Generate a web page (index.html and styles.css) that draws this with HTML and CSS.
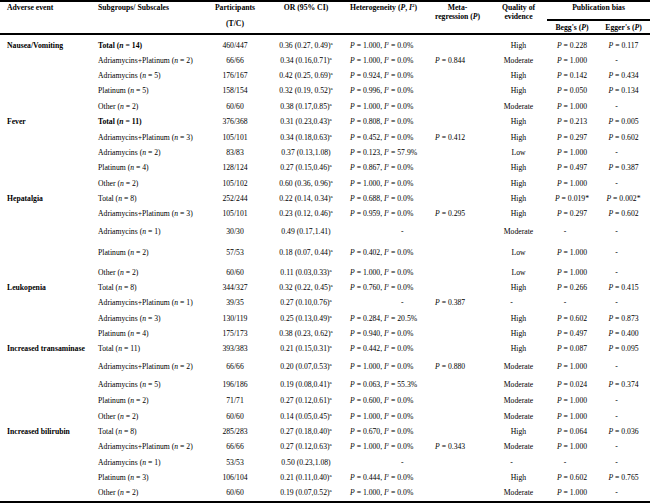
FILE: index.html
```html
<!DOCTYPE html>
<html>
<head>
<meta charset="utf-8">
<link rel="stylesheet" href="styles.css">
</head>
<body>
<table class="t">
<colgroup>
<col class="c1"><col class="c2"><col class="c3"><col class="c4"><col class="c5"><col class="c6"><col class="c7"><col class="c8"><col class="c9">
</colgroup>
<thead>
<tr class="hr1">
<th rowspan="2" class="hl1">Adverse event</th>
<th rowspan="2" class="hl2">Subgroups/ Subscales</th>
<th rowspan="2">Participants<span class="tc">(T/C)</span></th>
<th rowspan="2">OR (95% CI)</th>
<th rowspan="2" class="hlh">Heterogeneity (<i>P</i>, <i>I</i><sup class="s">2</sup>)</th>
<th rowspan="2">Meta-<br>regression (<i>P</i>)</th>
<th rowspan="2">Quality of<br>evidence</th>
<th colspan="2" class="pb">Publication bias</th>
</tr>
<tr class="hr2">
<th class="sub">Begg's (<i>P</i>)</th>
<th class="sub">Egger's (<i>P</i>)</th>
</tr>
</thead>
<tbody>
<tr><td class="ev">Nausea/Vomiting</td><td class="sg"><b>Total (<i>n</i> = 14)</b></td><td>460/447</td><td>0.36 (0.27, 0.49)<sup class="s">a</sup></td><td class="ht"><i>P</i> = 1.000, <i>I</i><sup class="s">2</sup> = 0.0%</td><td class="mr"></td><td>High</td><td><i>P</i> = 0.228</td><td><i>P</i> = 0.117</td></tr>
<tr><td class="ev"></td><td class="sg">Adriamycins+Platinum (<i>n</i> = 2)</td><td>66/66</td><td>0.34 (0.16,0.71)<sup class="s">a</sup></td><td class="ht"><i>P</i> = 1.000, <i>I</i><sup class="s">2</sup> = 0.0%</td><td class="mr"><i>P</i> = 0.844</td><td>Moderate</td><td><i>P</i> = 1.000</td><td class="dash">-</td></tr>
<tr><td class="ev"></td><td class="sg">Adriamycins (<i>n</i> = 5)</td><td>176/167</td><td>0.42 (0.25, 0.69)<sup class="s">a</sup></td><td class="ht"><i>P</i> = 0.924, <i>I</i><sup class="s">2</sup> = 0.0%</td><td class="mr"></td><td>High</td><td><i>P</i> = 0.142</td><td><i>P</i> = 0.434</td></tr>
<tr class="r16"><td class="ev"></td><td class="sg">Platinum (<i>n</i> = 5)</td><td>158/154</td><td>0.32 (0.19, 0.52)<sup class="s">a</sup></td><td class="ht"><i>P</i> = 0.996, <i>I</i><sup class="s">2</sup> = 0.0%</td><td class="mr"></td><td>High</td><td><i>P</i> = 0.050</td><td><i>P</i> = 0.134</td></tr>
<tr><td class="ev"></td><td class="sg">Other (<i>n</i> = 2)</td><td>60/60</td><td>0.38 (0.17,0.85)<sup class="s">a</sup></td><td class="ht"><i>P</i> = 1.000, <i>I</i><sup class="s">2</sup> = 0.0%</td><td class="mr"></td><td>Moderate</td><td><i>P</i> = 1.000</td><td class="dash">-</td></tr>

<tr class="r16"><td class="ev">Fever</td><td class="sg"><b>Total (<i>n</i> = 11)</b></td><td>376/368</td><td>0.31 (0.23,0.43)<sup class="s">a</sup></td><td class="ht"><i>P</i> = 0.808, <i>I</i><sup class="s">2</sup> = 0.0%</td><td class="mr"></td><td>High</td><td><i>P</i> = 0.213</td><td><i>P</i> = 0.005</td></tr>
<tr><td class="ev"></td><td class="sg">Adriamycins+Platinum (<i>n</i> = 3)</td><td>105/101</td><td>0.34 (0.18,0.63)<sup class="s">a</sup></td><td class="ht"><i>P</i> = 0.452, <i>I</i><sup class="s">2</sup> = 0.0%</td><td class="mr"><i>P</i> = 0.412</td><td>High</td><td><i>P</i> = 0.297</td><td><i>P</i> = 0.602</td></tr>
<tr><td class="ev"></td><td class="sg">Adriamycins (<i>n</i> = 2)</td><td>83/83</td><td>0.37 (0.13,1.08)</td><td class="ht"><i>P</i> = 0.123, <i>I</i><sup class="s">2</sup> = 57.9%</td><td class="mr"></td><td>Low</td><td><i>P</i> = 1.000</td><td class="dash">-</td></tr>
<tr class="r16"><td class="ev"></td><td class="sg">Platinum (<i>n</i> = 4)</td><td>128/124</td><td>0.27 (0.15,0.46)<sup class="s">a</sup></td><td class="ht"><i>P</i> = 0.867, <i>I</i><sup class="s">2</sup> = 0.0%</td><td class="mr"></td><td>High</td><td><i>P</i> = 0.497</td><td><i>P</i> = 0.387</td></tr>
<tr><td class="ev"></td><td class="sg">Other (<i>n</i> = 2)</td><td>105/102</td><td>0.60 (0.36, 0.96)<sup class="s">a</sup></td><td class="ht"><i>P</i> = 1.000, <i>I</i><sup class="s">2</sup> = 0.0%</td><td class="mr"></td><td>High</td><td><i>P</i> = 1.000</td><td class="dash">-</td></tr>

<tr><td class="ev">Hepatalgia</td><td class="sg">Total (<i>n</i> = 8)</td><td>252/244</td><td>0.22 (0.14, 0.34)<sup class="s">a</sup></td><td class="ht"><i>P</i> = 0.688, <i>I</i><sup class="s">2</sup> = 0.0%</td><td class="mr"></td><td>High</td><td><i>P</i> = 0.019*</td><td><i>P</i> = 0.002*</td></tr>
<tr class="r18"><td class="ev"></td><td class="sg">Adriamycins+Platinum (<i>n</i> = 3)</td><td>105/101</td><td>0.23 (0.12, 0.46)<sup class="s">a</sup></td><td class="ht"><i>P</i> = 0.959, <i>I</i><sup class="s">2</sup> = 0.0%</td><td class="mr"><i>P</i> = 0.295</td><td>High</td><td><i>P</i> = 0.297</td><td><i>P</i> = 0.602</td></tr>
<tr class="r21"><td class="ev"></td><td class="sg">Adriamycins (<i>n</i> = 1)</td><td>30/30</td><td>0.49 (0.17,1.41)</td><td class="ht hd">-</td><td class="mr"></td><td>Moderate</td><td class="dash">-</td><td class="dash">-</td></tr>
<tr class="r20"><td class="ev"></td><td class="sg">Platinum (<i>n</i> = 2)</td><td>57/53</td><td>0.18 (0.07, 0.44)<sup class="s">a</sup></td><td class="ht"><i>P</i> = 0.402, <i>I</i><sup class="s">2</sup> = 0.0%</td><td class="mr"></td><td>Low</td><td><i>P</i> = 1.000</td><td class="dash">-</td></tr>
<tr><td class="ev"></td><td class="sg">Other (<i>n</i> = 2)</td><td>60/60</td><td>0.11 (0.03,0.33)<sup class="s">a</sup></td><td class="ht"><i>P</i> = 1.000, <i>I</i><sup class="s">2</sup> = 0.0%</td><td class="mr"></td><td>Low</td><td><i>P</i> = 1.000</td><td class="dash">-</td></tr>

<tr><td class="ev">Leukopenia</td><td class="sg">Total (<i>n</i> = 8)</td><td>344/327</td><td>0.32 (0.22, 0.45)<sup class="s">a</sup></td><td class="ht"><i>P</i> = 0.760, <i>I</i><sup class="s">2</sup> = 0.0%</td><td class="mr"></td><td>High</td><td><i>P</i> = 0.266</td><td><i>P</i> = 0.415</td></tr>
<tr class="r16"><td class="ev"></td><td class="sg">Adriamycins+Platinum (<i>n</i> = 1)</td><td>39/35</td><td>0.27 (0.10,0.76)<sup class="s">a</sup></td><td class="ht hd">-</td><td class="mr"><i>P</i> = 0.387</td><td class="dash">-</td><td class="dash">-</td><td class="dash">-</td></tr>
<tr><td class="ev"></td><td class="sg">Adriamycins (<i>n</i> = 3)</td><td>130/119</td><td>0.25 (0.13,0.49)<sup class="s">a</sup></td><td class="ht"><i>P</i> = 0.284, <i>I</i><sup class="s">2</sup> = 20.5%</td><td class="mr"></td><td>High</td><td><i>P</i> = 0.602</td><td><i>P</i> = 0.873</td></tr>
<tr><td class="ev"></td><td class="sg">Platinum (<i>n</i> = 4)</td><td>175/173</td><td>0.38 (0.23, 0.62)<sup class="s">a</sup></td><td class="ht"><i>P</i> = 0.940, <i>I</i><sup class="s">2</sup> = 0.0%</td><td class="mr"></td><td>High</td><td><i>P</i> = 0.497</td><td><i>P</i> = 0.400</td></tr>

<tr class="r18"><td class="ev">Increased transaminase</td><td class="sg">Total (<i>n</i> = 11)</td><td>393/383</td><td>0.21 (0.15,0.31)<sup class="s">a</sup></td><td class="ht"><i>P</i> = 0.442, <i>I</i><sup class="s">2</sup> = 0.0%</td><td class="mr"></td><td>High</td><td><i>P</i> = 0.087</td><td><i>P</i> = 0.095</td></tr>
<tr class="r18"><td class="ev"></td><td class="sg">Adriamycins+Platinum (<i>n</i> = 2)</td><td>66/66</td><td>0.20 (0.07,0.53)<sup class="s">a</sup></td><td class="ht"><i>P</i> = 1.000, <i>I</i><sup class="s">2</sup> = 0.0%</td><td class="mr"><i>P</i> = 0.880</td><td>Moderate</td><td><i>P</i> = 1.000</td><td class="dash">-</td></tr>
<tr class="r16"><td class="ev"></td><td class="sg">Adriamycins (<i>n</i> = 5)</td><td>196/186</td><td>0.19 (0.08,0.41)<sup class="s">a</sup></td><td class="ht"><i>P</i> = 0.063, <i>I</i><sup class="s">2</sup> = 55.3%</td><td class="mr"></td><td>Moderate</td><td><i>P</i> = 0.024</td><td><i>P</i> = 0.374</td></tr>
<tr class="r16"><td class="ev"></td><td class="sg">Platinum (<i>n</i> = 2)</td><td>71/71</td><td>0.27 (0.12,0.61)<sup class="s">a</sup></td><td class="ht"><i>P</i> = 0.600, <i>I</i><sup class="s">2</sup> = 0.0%</td><td class="mr"></td><td>Moderate</td><td><i>P</i> = 1.000</td><td class="dash">-</td></tr>
<tr><td class="ev"></td><td class="sg">Other (<i>n</i> = 2)</td><td>60/60</td><td>0.14 (0.05,0.45)<sup class="s">a</sup></td><td class="ht"><i>P</i> = 1.000, <i>I</i><sup class="s">2</sup> = 0.0%</td><td class="mr"></td><td>Moderate</td><td><i>P</i> = 1.000</td><td class="dash">-</td></tr>

<tr><td class="ev">Increased bilirubin</td><td class="sg">Total (<i>n</i> = 8)</td><td>285/283</td><td>0.27 (0.18,0.40)<sup class="s">a</sup></td><td class="ht"><i>P</i> = 0.670, <i>I</i><sup class="s">2</sup> = 0.0%</td><td class="mr"></td><td>High</td><td><i>P</i> = 0.064</td><td><i>P</i> = 0.036</td></tr>
<tr class="r16"><td class="ev"></td><td class="sg">Adriamycins+Platinum (<i>n</i> = 2)</td><td>66/66</td><td>0.27 (0.12,0.63)<sup class="s">a</sup></td><td class="ht"><i>P</i> = 1.000, <i>I</i><sup class="s">2</sup> = 0.0%</td><td class="mr"><i>P</i> = 0.343</td><td>Moderate</td><td><i>P</i> = 1.000</td><td class="dash">-</td></tr>
<tr><td class="ev"></td><td class="sg">Adriamycins (<i>n</i> = 1)</td><td>53/53</td><td>0.50 (0.23,1.08)</td><td class="ht hd">-</td><td class="mr"></td><td class="dash">-</td><td class="dash">-</td><td class="dash">-</td></tr>
<tr><td class="ev"></td><td class="sg">Platinum (<i>n</i> = 3)</td><td>106/104</td><td>0.21 (0.11,0.40)<sup class="s">a</sup></td><td class="ht"><i>P</i> = 0.444, <i>I</i><sup class="s">2</sup> = 0.0%</td><td class="mr"></td><td>High</td><td><i>P</i> = 0.602</td><td><i>P</i> = 0.765</td></tr>
<tr class="last"><td class="ev"></td><td class="sg">Other (<i>n</i> = 2)</td><td>60/60</td><td>0.19 (0.07,0.52)<sup class="s">a</sup></td><td class="ht"><i>P</i> = 1.000, <i>I</i><sup class="s">2</sup> = 0.0%</td><td class="mr"></td><td>Moderate</td><td><i>P</i> = 1.000</td><td class="dash">-</td></tr>
</tbody>
</table>
</body>
</html>
```

FILE: styles.css
```css
html, body {
  margin: 0;
  padding: 0;
  background: #ffffff;
}

body {
  color: #000000;
  font-family: "Liberation Serif", "Times New Roman", serif;
  font-size: 7.7px;
}

.t {
  width: 650px;
  table-layout: fixed;
  border-collapse: separate;
  border-spacing: 0;
}

.c1 { width: 98px; }
.c2 { width: 102px; }
.c3 { width: 70px; }
.c4 { width: 72px; }
.c5 { width: 83px; }
.c6 { width: 65px; }
.c7 { width: 57px; }
.c8 { width: 50px; }
.c9 { width: 53px; }

th, td {
  padding: 0;
  white-space: nowrap;
  overflow: visible;
}

thead th {
  font-weight: bold;
  text-align: center;
  vertical-align: top;
  line-height: 9px;
  padding-top: 1px;
  border-top: 2px solid #000;
  border-bottom: 2px solid #000;
}

.hr1 { height: 21px; }
.hr2 { height: 14px; }

thead th.hl1 { text-align: left; padding-left: 7px; }
thead th.hl2 { text-align: left; }
thead th.hlh { text-align: left; padding-left: 8px; }

.tc {
  display: block;
  margin-top: 7px;
}

thead th.sub {
  border-top: 0;
  padding-top: 2px;
}

tbody tr { height: 15px; }
tbody tr.r16 { height: 16px; }
tbody tr.r18 { height: 18px; }
tbody tr.r20 { height: 20px; }
tbody tr.r21 { height: 21px; }
tbody tr.last { height: 21px; }
tbody tr.last td { border-bottom: 2px solid #000; }

tbody td {
  text-align: center;
  vertical-align: top;
  line-height: 9px;
  padding-top: 6px;
}

tbody td.ev {
  text-align: left;
  padding-left: 7px;
  font-weight: bold;
}

tbody td.sg { text-align: left; }

tbody td.ht {
  text-align: left;
  padding-left: 8px;
}

tbody td.hd { padding-left: 59px; }

tbody td.mr {
  text-align: left;
  padding-left: 10px;
}

tbody td.dash { padding-right: 14px; }

.s {
  font-size: 5px;
  line-height: 0;
  vertical-align: 3px;
}

i { font-style: italic; }
```
